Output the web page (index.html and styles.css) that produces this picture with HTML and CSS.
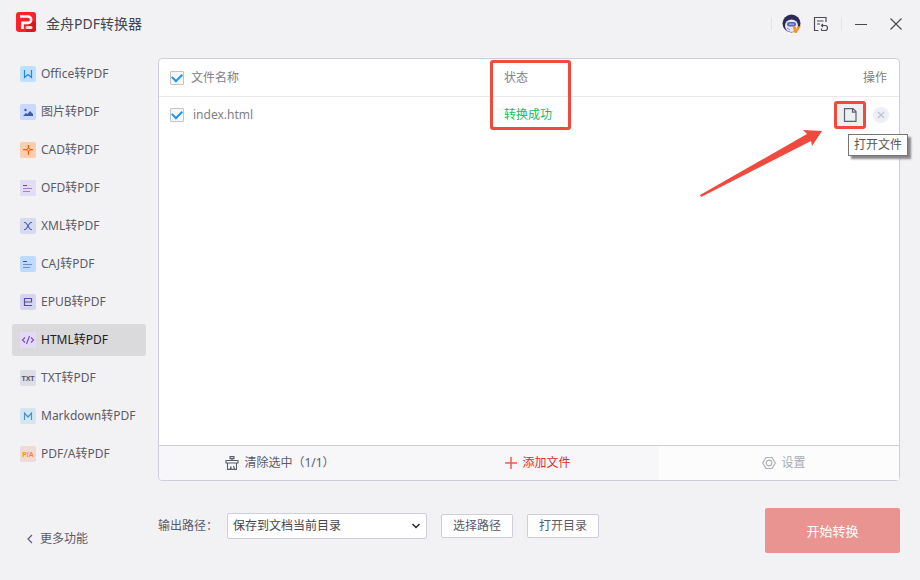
FILE: index.html
```html
<!DOCTYPE html>
<html lang="zh-CN">
  <head>
    <meta charset="UTF-8" />
    <meta name="viewport" content="width=device-width, initial-scale=1.0" />
    <title>金舟PDF转换器</title>
    <link rel="stylesheet" href="styles.css">
  </head>
  <body>
    <header class="titlebar">
      <svg class="logo" width="20" height="20" viewBox="0 0 20 20">
        <rect width="20" height="20" rx="3" fill="#fb222b" />
        <path d="M10 18l6-11 4 4v6a3 3 0 0 1-3 3h-7z" fill="#dc161e" />
        <path d="M4 4.500h8a3.200 3.200 0 0 1 0 6.400H6.500V17" fill="none" stroke="#fff" stroke-width="2.600" />
        <rect x="9.500" y="14" width="7" height="3" rx="1.500" fill="#ffd9d9" />
      </svg>
      <h1 class="title">金舟PDF转换器</h1>
      <div class="window-btns">
        <span class="divider"></span>
        <button class="icon-btn avatar" type="button" aria-label="账户">
          <svg width="20" height="20" viewBox="0 0 20 20">
            <circle cx="9.500" cy="9.500" r="9" fill="#2d2a58" />
            <path d="M3 11.500a6.500 6 0 0 1 13 0c0 3-2 6.500-6.500 6.500S3 14.500 3 11.500z" fill="#e4e6fa" />
            <rect x="5" y="8" width="9" height="4.500" rx="2.200" fill="#5a66b4" />
            <path d="M7 10.200h5" stroke="#b9c2f0" />
            <path d="M5 14l3 2" stroke="#8088c8" />
            <path d="M10.500 12l3 .5 1 2.500 1.500-2.500 3-.5-4.500 7h-2z" fill="#ff9518" />
          </svg>
        </button>
        <button class="icon-btn record" type="button" aria-label="记录">
          <svg width="16" height="16" viewBox="0 0 16 16" fill="none" stroke="#4b4c55" stroke-width="1.200">
            <path d="M5.500 14.500H1.500V1.500h11.500V6M4 5h6.500M4 8h3" />
            <path d="M8.500 9.500h3.500a2.300 2.300 0 0 1 0 5H8.500M10 8L8.500 9.500 10 11M8.500 12.500v2" />
          </svg>
        </button>
        <span class="divider"></span>
        <button class="icon-btn minimize" type="button" aria-label="最小化">
          <svg width="14" height="14" viewBox="0 0 14 14" stroke="#45464e"><path d="M1 7.500h12" /></svg>
        </button>
        <button class="icon-btn close" type="button" aria-label="关闭">
          <svg width="14" height="14" viewBox="0 0 14 14" stroke="#45464e" stroke-width="1.100"><path d="M1.500 1.500l11 11M12.500 1.500l-11 11" /></svg>
        </button>
      </div>
    </header>

    <div class="layout">
      <nav class="sidebar">
        <a class="item" href="#office">
          <svg width="16" height="16" viewBox="0 0 16 16">
            <rect width="16" height="16" rx="2" fill="#bfe1ff" />
            <path d="M4.500 4v7.500L8 8.500l3.500 3V4" fill="none" stroke="#1f86dc" stroke-width="1.200" />
          </svg>
          Office转PDF
        </a>
        <a class="item" href="#image">
          <svg width="16" height="16" viewBox="0 0 16 16">
            <rect width="16" height="16" rx="2" fill="#c8d8ff" />
            <path d="M3 12l3-3 1.500 1L10 7l3 3v2z" fill="#3e5ba8" />
            <circle cx="5.500" cy="6" r="1.200" fill="#3e5ba8" />
          </svg>
          图片转PDF
        </a>
        <a class="item" href="#cad">
          <svg width="16" height="16" viewBox="0 0 16 16">
            <rect width="16" height="16" rx="2" fill="#ffcdb0" />
            <path d="M8.500 3v3.500M8.500 9v4M3 7.700h4M10 7.700h3" stroke="#fb5a08" stroke-width="1.200" />
            <circle cx="8.500" cy="7.700" r="1.500" fill="none" stroke="#fb5a08" />
          </svg>
          CAD转PDF
        </a>
        <a class="item" href="#ofd">
          <svg width="16" height="16" viewBox="0 0 16 16">
            <rect width="16" height="16" rx="2" fill="#e2dcf5" />
            <path d="M3 5.500h4" stroke="#7040b0" />
            <path d="M3 8.500h9M3 11.500h7" stroke="#aa7bd8" />
          </svg>
          OFD转PDF
        </a>
        <a class="item" href="#xml">
          <svg width="16" height="16" viewBox="0 0 16 16">
            <rect width="16" height="16" rx="2" fill="#d5daee" />
            <path d="M4 4.500h1c2 0 4 7 6 7h1M12 4.500h-1c-2 0-4 7-6 7H4" fill="none" stroke="#4a5bc4" stroke-width="1.200" />
          </svg>
          XML转PDF
        </a>
        <a class="item" href="#caj">
          <svg width="16" height="16" viewBox="0 0 16 16">
            <rect width="16" height="16" rx="2" fill="#bfdaff" />
            <path d="M3 5.500h4" stroke="#36559b" />
            <path d="M3 8.500h9M3 11.500h7" stroke="#6b91cd" />
          </svg>
          CAJ转PDF
        </a>
        <a class="item" href="#epub">
          <svg width="16" height="16" viewBox="0 0 16 16">
            <rect width="16" height="16" rx="2" fill="#d6d5f0" />
            <path d="M4.500 8h7V4.500h-7v7H12" fill="none" stroke="#5a4bb4" stroke-width="1.200" />
          </svg>
          EPUB转PDF
        </a>
        <a class="item active" href="#html">
          <svg width="16" height="16" viewBox="0 0 16 16">
            <rect width="16" height="16" rx="2" fill="#e2daf6" />
            <path d="M5 5.500L2.500 8 5 10.500M11 5.500L13.500 8 11 10.500M9.500 4l-3 8" fill="none" stroke="#8650be" stroke-width="1.200" />
          </svg>
          HTML转PDF
        </a>
        <a class="item" href="#txt">
          <svg width="16" height="16" viewBox="0 0 16 16">
            <rect width="16" height="16" rx="2" fill="#dcdde5" />
            <text class="badge" x="8" y="11" text-anchor="middle" fill="#4e5068">TXT</text>
          </svg>
          TXT转PDF
        </a>
        <a class="item" href="#markdown">
          <svg width="16" height="16" viewBox="0 0 16 16">
            <rect width="16" height="16" rx="2" fill="#d4e6f0" />
            <path d="M4.500 12V5L8 9l3.500-4v7" fill="none" stroke="#4792cc" stroke-width="1.200" />
          </svg>
          Markdown转PDF
        </a>
        <a class="item" href="#pdfa">
          <svg width="16" height="16" viewBox="0 0 16 16">
            <rect width="16" height="16" rx="2" fill="#f0dad6" />
            <text class="badge" x="8" y="11" text-anchor="middle" fill="#fa8a28">P/A</text>
          </svg>
          PDF/A转PDF
        </a>
        <a class="more" href="#more">
          <svg width="8" height="10" viewBox="0 0 8 10" fill="none" stroke="#5d5e6e" stroke-width="1.200"><path d="M6 1L2 5l4 4" /></svg>
          更多功能
        </a>
      </nav>

      <main class="main">
        <section class="card">
          <table class="files">
            <thead>
              <tr>
                <th class="name">
                  <label class="check"><input type="checkbox" checked />文件名称</label>
                </th>
                <th class="status">状态<span class="mark"></span></th>
                <th class="ops">操作</th>
              </tr>
            </thead>
            <tbody>
              <tr>
                <td class="name">
                  <label class="check"><input type="checkbox" checked />index.html</label>
                </td>
                <td class="status success">转换成功</td>
                <td class="ops">
                  <div class="actions">
                    <button class="open" type="button" aria-describedby="open-tip">
                      <svg width="14" height="14" viewBox="0 0 14 14" fill="none" stroke="#59607a" stroke-width="1.200">
                        <path d="M1.500 .6h8.500l3 3v9.800H1.500zM9.500 .6v3.500h3.500" />
                      </svg>
                    </button>
                    <button class="remove" type="button" aria-label="移除">
                      <svg width="16" height="16" viewBox="0 0 16 16">
                        <circle cx="8" cy="8" r="8" fill="#eeeff4" />
                        <path d="M5 5l6 6M11 5l-6 6" stroke="#bcbfd0" stroke-width="1.200" />
                      </svg>
                    </button>
                    <span class="tooltip" id="open-tip" role="tooltip">打开文件</span>
                    <svg class="arrow" width="122" height="68" viewBox="0 0 122 68" fill="#f04a3e">
                      <path d="M0 66L107 5 103 1 122 2 112 17 111 12 1 68z" />
                    </svg>
                  </div>
                </td>
              </tr>
            </tbody>
          </table>
          <div class="toolbar">
            <button class="tool clear" type="button">
              <svg width="14" height="14" viewBox="0 0 14 14" fill="none" stroke="#5d5e6e" stroke-width="1.100">
                <path d="M5 .6h4v2H5zM7 2.600v2M1 7v-2.500h12V7zM2.500 7v6.400h2.500l1-3v3h5.500V7M8.500 10l1 3" />
              </svg>
              清除选中（1/1）
            </button>
            <button class="tool" type="button">
              <svg width="12" height="12" viewBox="0 0 12 12" stroke="#ee5a55" stroke-width="1.500"><path d="M6 0v12M0 6h12" /></svg>
              添加文件
            </button>
            <button class="tool settings" type="button" disabled>
              <svg width="14" height="14" viewBox="0 0 14 14" fill="none" stroke="#aeb0b9" stroke-width="1.200">
                <path d="M4 1.500h6L13.300 7 10 12.500H4L.7 7z" />
                <circle cx="7" cy="7" r="2.800" />
              </svg>
              设置
            </button>
          </div>
        </section>

        <form class="output">
          <label for="path">输出路径：</label>
          <div class="select">
            <select id="path">
              <option>保存到文档当前目录</option>
            </select>
            <svg width="8" height="6" viewBox="0 0 8 6" fill="none" stroke="#222" stroke-width="1.400"><path d="M.5 1L4 4.500 7.500 1" /></svg>
          </div>
          <button class="btn" type="button">选择路径</button>
          <button class="btn" type="button">打开目录</button>
          <button class="start" type="submit" disabled>开始转换</button>
        </form>
      </main>
    </div>
  </body>
</html>
```

FILE: styles.css
```css
* {
  box-sizing: border-box;
}
body {
  margin: 0;
  min-height: 100vh;
  display: flex;
  flex-direction: column;
  background: #f2f2f4;
  color: #5a5b6a;
  font-family: "Noto Sans", "Noto Sans CJK SC", sans-serif;
  font-size: 12px;
  line-height: 16px;
}
button,
select {
  font: inherit;
  color: inherit;
  margin: 0;
}
button {
  padding: 0;
  border: none;
  background: none;
}
svg {
  display: block;
  flex: none;
}

/* title bar */
.titlebar {
  display: flex;
  align-items: center;
  height: 48px;
  padding: 0 16px;
}
.logo {
  margin-bottom: 4px;
}
.title {
  margin: 0 auto 0 10px;
  font-size: 14px;
  font-weight: 400;
  line-height: 20px;
  color: #45464f;
}
.window-btns {
  display: flex;
  align-items: center;
}
.divider {
  width: 1px;
  height: 14px;
  background: #e0e0e5;
}
.avatar {
  margin: 0 11px 0 10px;
}
.record {
  margin-right: 12px;
}
.minimize {
  margin: 0 21px 0 12px;
}
.close {
  margin-right: 1px;
}

/* sidebar */
.layout {
  flex: 1;
  display: flex;
  gap: 12px;
  padding: 10px 20px 27px 12px;
}
.sidebar {
  width: 134px;
  display: flex;
  flex-direction: column;
  gap: 6px;
}
.item {
  display: flex;
  align-items: center;
  gap: 5px;
  height: 32px;
  padding-left: 8px;
  border-radius: 3px;
  color: inherit;
  text-decoration: none;
  white-space: nowrap;
}
.item.active {
  background: #dadadc;
  color: #1c1c24;
}
.badge {
  font-family: "Liberation Sans", sans-serif;
  font-size: 7px;
  font-weight: 700;
}
.more {
  display: flex;
  align-items: center;
  gap: 6px;
  margin-top: auto;
  padding: 0 0 6px 14px;
  color: inherit;
  text-decoration: none;
}

/* file list */
.main {
  flex: 1;
  display: flex;
  flex-direction: column;
  gap: 27px;
}
.card {
  flex: 1;
  display: flex;
  flex-direction: column;
  background: #fff;
  border: 1px solid #cdcddb;
  border-radius: 4px;
}
.files {
  width: 100%;
  margin-bottom: auto;
  table-layout: fixed;
  border-collapse: collapse;
  color: #808085;
}
.files th,
.files td {
  height: 37px;
  padding: 0;
  font-weight: 400;
  text-align: left;
}
.files th {
  padding-top: 2px;
  border-bottom: 1px solid #e9e9ec;
}
.files .name {
  width: 45%;
  padding-left: 11px;
}
.files .status {
  position: relative;
  padding-left: 12px;
}
.files .success {
  color: #12bb66;
}
.files .ops {
  width: 160px;
  padding-right: 10px;
  text-align: right;
}
.files th.ops {
  padding-right: 12px;
}
.check {
  display: flex;
  align-items: center;
  gap: 7px;
}
td .check {
  gap: 9px;
}
.check input {
  appearance: none;
  display: grid;
  place-items: center;
  width: 14px;
  height: 14px;
  margin: 0;
  border: 1px solid #c4c4c8;
  border-radius: 1px;
  background: #f6f6f7;
}
.check input:checked::after {
  content: "";
  width: 8px;
  height: 5px;
  margin-bottom: 3px;
  border: solid #2196f3;
  border-width: 0 0 2px 2px;
  transform: rotate(-45deg);
}
.actions {
  position: relative;
  display: flex;
  align-items: center;
  justify-content: flex-end;
  gap: 7px;
}
.open {
  display: grid;
  place-items: center;
  width: 32px;
  height: 28px;
  border: 3px solid #f04a3e;
  border-radius: 3px;
  background: #efeff0;
}
.mark {
  position: absolute;
  top: 1px;
  left: -2px;
  width: 81px;
  height: 70px;
  border: 3px solid #f04a3e;
  border-radius: 3px;
}
.tooltip {
  position: absolute;
  top: 33px;
  right: -19px;
  padding: 2px 5px;
  border: 1px solid #767676;
  background: #fff;
  box-shadow: 3px 3px 2px #88888c;
  color: #55555c;
}
.arrow {
  position: absolute;
  top: 28px;
  right: 67px;
}
.toolbar {
  display: flex;
  height: 35px;
  border-top: 1px solid #cdcddb;
  border-radius: 0 0 4px 4px;
  background: #f7f7fa;
}
.tool {
  flex: 1;
  display: flex;
  align-items: center;
  justify-content: center;
  gap: 5px;
  color: #e02a28;
}
.tool.clear {
  padding-right: 16px;
  color: inherit;
}
.tool.settings {
  flex: none;
  width: 240px;
  padding-left: 10px;
  background: #fcfcfd;
  color: #a9abb5;
}

/* output options */
.output {
  display: flex;
  align-items: center;
  height: 45px;
}
.output label {
  width: 69px;
}
.select {
  display: grid;
  align-items: center;
  width: 200px;
  margin-right: 14px;
}
.select select,
.select svg {
  grid-area: 1 / 1;
}
.select select {
  appearance: none;
  width: 100%;
  height: 26px;
  padding: 0 5px;
  border: 1px solid #cdcddb;
  border-radius: 2px;
  background: #fff;
  color: #44454e;
}
.select svg {
  justify-self: end;
  margin-right: 7px;
  pointer-events: none;
}
.output label,
.select,
.btn {
  margin-bottom: 9px;
}
.btn {
  width: 72px;
  height: 24px;
  margin-right: 14px;
  border: 1px solid #cdcddb;
  border-radius: 2px;
  background: #fff;
}
.start {
  width: 135px;
  height: 45px;
  margin-left: auto;
  border-radius: 2px;
  background: #ea9492;
  color: #fff;
  font-size: 13px;
}
```
